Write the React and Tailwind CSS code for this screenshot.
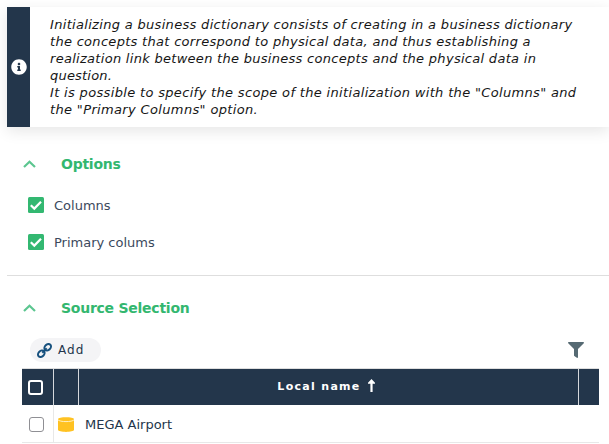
import { FaInfoCircle, FaFilter } from "react-icons/fa";

const paragraphs = [
  { text: "Initializing a business dictionary consists of creating in a business dictionary", tracking: "tracking-[0.315px]" },
  { text: "the concepts that correspond to physical data, and thus establishing a", tracking: "tracking-[0.3px]" },
  { text: "realization link between the business concepts and the physical data in", tracking: "tracking-[0.29px]" },
  { text: "question.", tracking: "tracking-[0.2px]" },
  { text: 'It is possible to specify the scope of the initialization with the "Columns" and', tracking: "tracking-[0.335px]" },
  { text: 'the "Primary Columns" option.', tracking: "tracking-[0.35px]" },
];

function SectionHeading({ children }) {
  return (
    <div className="flex h-6 items-center pl-[23px]">
      <svg className="h-[8px] w-[13px]" viewBox="0 0 13 8" fill="none" stroke="#5cc690" strokeWidth="2.2">
        <path d="M1 7 6.5 1.7 12 7" />
      </svg>
      <h2 className="ml-[25px] whitespace-nowrap text-[14px] font-bold tracking-[-0.25px] text-[#33b76f]">
        {children}
      </h2>
    </div>
  );
}

function CheckedOption({ children }) {
  return (
    <label className="flex h-4 items-center pl-[28px]">
      <svg className="size-4 shrink-0" viewBox="0 0 16 16">
        <rect width="16" height="16" rx="1.5" fill="#33b871" />
        <path d="M2.8 8.2 6.3 11.6 13 4.7" fill="none" stroke="white" strokeWidth="2.2" />
      </svg>
      <span className="ml-[10px] whitespace-nowrap pt-[2px] text-[13px] text-[#3b495d]">{children}</span>
    </label>
  );
}

function ChainIcon() {
  return (
    <svg className="size-[15px]" viewBox="0 0 15 15" fill="none" stroke="#17517e" strokeWidth="2">
      <ellipse cx="4.3" cy="10.7" rx="3.7" ry="2.8" transform="rotate(-45 4.3 10.7)" />
      <ellipse cx="10.7" cy="4.3" rx="3.7" ry="2.8" transform="rotate(-45 10.7 4.3)" />
      <path d="M5.3 9.7 9.7 5.3" />
    </svg>
  );
}

export default function App() {
  return (
    <div className="h-[444px] w-[609px] overflow-hidden bg-white pt-[7px] font-['Verdana','DejaVu_Sans',sans-serif]">
      <section className="ml-[7px] flex h-[120px] shadow-[0_4px_14px_rgba(0,0,0,0.1)]">
        <div className="flex w-[23px] items-center justify-center bg-[#23364b]">
          <FaInfoCircle className="size-4 text-white" />
        </div>
        <div className="ml-5 pt-[9px] text-[13px] leading-[17px] text-[#161616] italic">
          {paragraphs.map(({ text, tracking }) => (
            <p key={text} className={`whitespace-nowrap ${tracking}`}>{text}</p>
          ))}
        </div>
      </section>

      <section className="ml-[7px] mt-[25px] h-[124px] border-b border-[#dedede]">
        <div className="-ml-[7px]">
          <SectionHeading>Options</SectionHeading>
          <div className="mt-[21px] flex flex-col gap-[21px]">
            <CheckedOption>Columns</CheckedOption>
            <CheckedOption>Primary colums</CheckedOption>
          </div>
        </div>
      </section>

      <section className="pt-5">
        <SectionHeading>Source Selection</SectionHeading>
        <div className="mt-[18px] flex h-6 items-center justify-between pr-[25px] pl-[30px]">
          <button className="flex h-6 w-[71px] items-center rounded-full bg-[#f4f4f6] pl-[7px] text-[12px] tracking-[1.1px] text-[#23364b]">
            <ChainIcon />
            <span className="ml-[6px]">Add</span>
          </button>
          <FaFilter className="size-4 text-[#566a73]" />
        </div>
        <div className="mt-[6px] ml-[22px] w-[577px] border-t border-[#dedede]">
          <div className="grid h-9 grid-cols-[32px_25px_500px_20px] bg-[#23364b]">
            <div className="flex items-center border-r border-[#d5d8dc] pl-[6px]">
              <span className="size-[15px] rounded-[3px] border-2 border-white" />
            </div>
            <div className="border-r border-[#d5d8dc]" />
            <div className="flex items-center justify-center border-r border-[#d5d8dc] pr-[5px] text-[11px] font-bold tracking-[1.3px] text-white">
              <span>Local name</span>
              <svg className="ml-[7px] mb-[3px] h-[13px] w-[7px]" viewBox="0 0 7 13" fill="white">
                <path d="M3.5 0 7 3.7V4.8H4.6V13H2.4V4.8H0V3.7Z" />
              </svg>
            </div>
          </div>
          <div className="flex h-[38px] items-center border-b border-[#e8e8e8]">
            <div className="flex h-full w-8 items-center border-r border-[#e8e8e8] pl-[7px]">
              <span className="mt-px size-[15px] rounded-[3px] border border-[#8f8f94]" />
            </div>
            <svg className="mt-px ml-1 h-[15px] w-4" viewBox="0 0 16 15">
              <path d="M0 2.2C0 -.4 16 -.4 16 2.2V12.8C16 15.6 0 15.6 0 12.8Z" fill="#ffc222" />
              <path d="M0 2.8C1.5 5.2 14.5 5.2 16 2.8" fill="none" stroke="#fff0c4" />
            </svg>
            <span className="ml-[11px] whitespace-nowrap pt-[2px] text-[13px] text-[#23364b]">MEGA Airport</span>
          </div>
        </div>
      </section>
    </div>
  );
}
